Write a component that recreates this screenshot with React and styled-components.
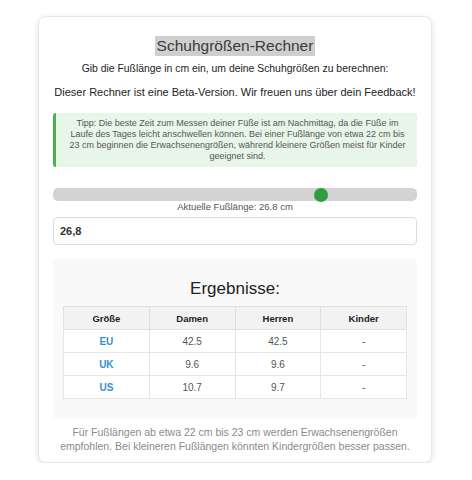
import styled, { createGlobalStyle } from 'styled-components';

const GlobalStyle = createGlobalStyle`
  body {
    margin: 0;
    background: #ffffff;
    font-family: "Liberation Sans", Arial, sans-serif;
    color: #333;
  }
`;

const Card = styled.div`
  width: 364px;
  margin: 16px 0 0 38px;
  padding: 19px 14px 9px;
  border: 1px solid #e6e6e6;
  border-radius: 8px;
  box-shadow: 0 2px 6px rgba(0, 0, 0, 0.12);
  display: flex;
  flex-direction: column;
  align-items: stretch;
`;

const Title = styled.h1`
  align-self: center;
  margin: 0;
  padding: 1px 2px;
  font-size: 15.5px;
  font-weight: normal;
  line-height: 18px;
  color: #3a3a3a;
  background: #cfcfcf;
`;

const Lead = styled.p`
  margin: ${p => p.$top}px 0 0;
  font-size: ${p => p.$size}px;
  line-height: 14px;
  text-align: center;
  color: #222;
`;

const Tip = styled.div`
  margin-top: 14px;
  padding: 5px 10px 5px 12px;
  background: #e8f5e9;
  border-left: 3px solid #4caf50;
  border-radius: 3px;
  font-size: 9px;
  line-height: 11px;
  text-align: center;
  color: #555;
`;

const Track = styled.div`
  position: relative;
  margin-top: 21px;
  height: 13px;
  border-radius: 5px;
  background: #d3d3d3;
`;

const Thumb = styled.div`
  position: absolute;
  top: 0;
  width: 14px;
  height: 14px;
  border-radius: 50%;
  background: #2e9e3e;
  transform: translateX(-50%);
`;

const SliderLabel = styled.div`
  font-size: 9.5px;
  line-height: 12px;
  text-align: center;
  color: #555;
`;

const Input = styled.div`
  margin-top: 4px;
  height: 26px;
  padding: 0 6px;
  border: 1px solid #dcdcdc;
  border-radius: 4px;
  display: flex;
  align-items: center;
  font-size: 11px;
  font-weight: bold;
  color: #333;
`;

const Results = styled.div`
  margin-top: 14px;
  padding: 20px 10px 20px;
  background: #f9f9f9;
  border-radius: 4px;
  display: flex;
  flex-direction: column;
  align-items: stretch;
`;

const ResultsTitle = styled.h2`
  margin: 0 0 7px;
  font-size: 17px;
  font-weight: normal;
  line-height: 20px;
  text-align: center;
  color: #222;
`;

const Table = styled.table`
  width: 100%;
  border-collapse: collapse;
  background: #fff;
  table-layout: fixed;
`;

const Th = styled.th`
  height: 20px;
  border: 1px solid #e0e0e0;
  background: #f2f2f2;
  font-size: 9.5px;
  font-weight: bold;
  color: #222;
`;

const Td = styled.td`
  height: 20px;
  border: 1px solid #e6e6e6;
  text-align: center;
  font-size: 10px;
  font-weight: ${p => (p.$label ? 'bold' : 'normal')};
  color: ${p => (p.$label ? '#3a8fd0' : '#555')};
`;

const Note = styled.p`
  margin: 6px 0 0;
  padding: 0 4px;
  font-size: 10.5px;
  line-height: 14px;
  text-align: center;
  color: #8a8a8a;
`;

const rows = [
  ['EU', '42.5', '42.5', '-'],
  ['UK', '9.6', '9.6', '-'],
  ['US', '10.7', '9.7', '-'],
];

const footLength = 26.8;
const minLength = 0;
const maxLength = 36;

export default function App() {
  const frac = (footLength - minLength) / (maxLength - minLength);
  return (
    <>
      <GlobalStyle />
      <Card>
        <Title>Schuhgrößen-Rechner</Title>
        <Lead $top={6} $size={10.4}>
          Gib die Fußlänge in cm ein, um deine Schuhgrößen zu berechnen:
        </Lead>
        <Lead $top={9} $size={11}>
          Dieser Rechner ist eine Beta-Version. Wir freuen uns über dein Feedback!
        </Lead>
        <Tip>
          Tipp: Die beste Zeit zum Messen deiner Füße ist am Nachmittag, da die Füße im Laufe des
          Tages leicht anschwellen können. Bei einer Fußlänge von etwa 22 cm bis 23 cm beginnen die
          Erwachsenengrößen, während kleinere Größen meist für Kinder geeignet sind.
        </Tip>
        <Track>
          <Thumb style={{ left: `calc(7px + ${frac} * (100% - 14px))` }} />
        </Track>
        <SliderLabel>Aktuelle Fußlänge: 26.8 cm</SliderLabel>
        <Input>26,8</Input>
        <Results>
          <ResultsTitle>Ergebnisse:</ResultsTitle>
          <Table>
            <thead>
              <tr>
                <Th>Größe</Th>
                <Th>Damen</Th>
                <Th>Herren</Th>
                <Th>Kinder</Th>
              </tr>
            </thead>
            <tbody>
              {rows.map(r => (
                <tr key={r[0]}>
                  <Td $label>{r[0]}</Td>
                  <Td>{r[1]}</Td>
                  <Td>{r[2]}</Td>
                  <Td>{r[3]}</Td>
                </tr>
              ))}
            </tbody>
          </Table>
        </Results>
        <Note>
          Für Fußlängen ab etwa 22 cm bis 23 cm werden Erwachsenengrößen empfohlen. Bei kleineren
          Fußlängen könnten Kindergrößen besser passen.
        </Note>
      </Card>
    </>
  );
}
